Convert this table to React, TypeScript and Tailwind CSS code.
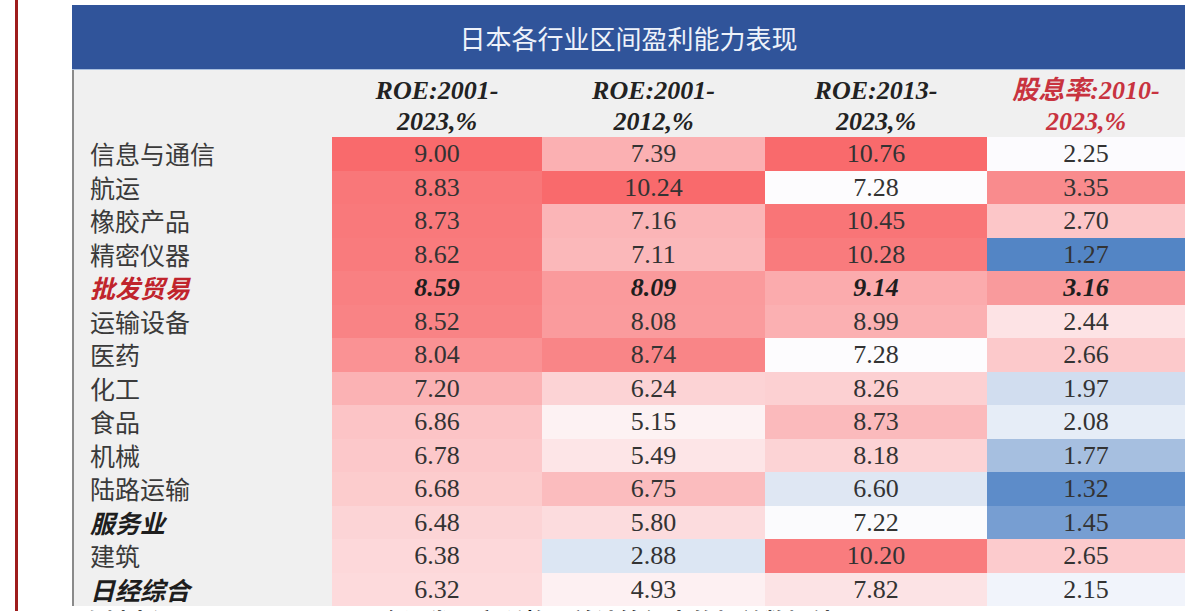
import React from "react";

type Cell = [string, string];
type Row = { label: string; style?: "red" | "bold"; cells: Cell[] };

const rows: Row[] = [
  { label: "信息与通信", cells: [["9.00", "bg-[#f96a6c]"], ["7.39", "bg-[#fbb0b2]"], ["10.76", "bg-[#f96a6c]"], ["2.25", "bg-[#fcfbfe]"]] },
  { label: "航运", cells: [["8.83", "bg-[#f97779]"], ["10.24", "bg-[#f96a6c]"], ["7.28", "bg-[#fdfcfe]"], ["3.35", "bg-[#f98b8d]"]] },
  { label: "橡胶产品", cells: [["8.73", "bg-[#f9797b]"], ["7.16", "bg-[#fbb5b7]"], ["10.45", "bg-[#f97577]"], ["2.70", "bg-[#fcc6c8]"]] },
  { label: "精密仪器", cells: [["8.62", "bg-[#f97b7d]"], ["7.11", "bg-[#fbb8ba]"], ["10.28", "bg-[#f97b7d]"], ["1.27", "bg-[#5385c5]"]] },
  { label: "批发贸易", style: "red", cells: [["8.59", "bg-[#f98082]"], ["8.09", "bg-[#fa9a9c]"], ["9.14", "bg-[#fbabad]"], ["3.16", "bg-[#f99a9c]"]] },
  { label: "运输设备", cells: [["8.52", "bg-[#f98385]"], ["8.08", "bg-[#fa9b9d]"], ["8.99", "bg-[#fbb0b2]"], ["2.44", "bg-[#fde3e5]"]] },
  { label: "医药", cells: [["8.04", "bg-[#fa9294]"], ["8.74", "bg-[#f98587]"], ["7.28", "bg-[#fdfcfe]"], ["2.66", "bg-[#fcc9cb]"]] },
  { label: "化工", cells: [["7.20", "bg-[#fbb2b4]"], ["6.24", "bg-[#fcd3d5]"], ["8.26", "bg-[#fcd0d2]"], ["1.97", "bg-[#d1ddef]"]] },
  { label: "食品", cells: [["6.86", "bg-[#fcc4c6]"], ["5.15", "bg-[#fdf2f3]"], ["8.73", "bg-[#fbbabc]"], ["2.08", "bg-[#e6edf7]"]] },
  { label: "机械", cells: [["6.78", "bg-[#fcc8ca]"], ["5.49", "bg-[#fde5e7]"], ["8.18", "bg-[#fcd3d5]"], ["1.77", "bg-[#a6bfe0]"]] },
  { label: "陆路运输", cells: [["6.68", "bg-[#fccccd]"], ["6.75", "bg-[#fbbcbe]"], ["6.60", "bg-[#dfe7f3]"], ["1.32", "bg-[#5d8cc9]"]] },
  { label: "服务业", style: "bold", cells: [["6.48", "bg-[#fcd4d6]"], ["5.80", "bg-[#fcdcde]"], ["7.22", "bg-[#fbfbfd]"], ["1.45", "bg-[#779ed2]"]] },
  { label: "建筑", cells: [["6.38", "bg-[#fdd8da]"], ["2.88", "bg-[#dce6f3]"], ["10.20", "bg-[#f97c7e]"], ["2.65", "bg-[#fccbcd]"]] },
  { label: "日经综合", style: "bold", cells: [["6.32", "bg-[#fddadc]"], ["4.93", "bg-[#fdf0f2]"], ["7.82", "bg-[#fce3e5]"], ["2.15", "bg-[#f1f4fb]"]] },
];

const colWidths = ["w-[210px]", "w-[223px]", "w-[222px]", "w-[198px]"];

const serif = "font-['Liberation_Serif','Noto_Serif','Noto_Sans_CJK_SC',serif]";
const cjk = "font-['Noto_Sans_CJK_SC','Liberation_Serif',sans-serif]";

export default function App() {
  const headers: { l1: string; l2: string; red?: boolean }[] = [
    { l1: "ROE:2001-", l2: "2023,%" },
    { l1: "ROE:2001-", l2: "2012,%" },
    { l1: "ROE:2013-", l2: "2023,%" },
    { l1: "股息率:2010-", l2: "2023,%", red: true },
  ];
  return (
    <div className="w-[1200px] h-[611px] bg-white overflow-hidden flex">
      <div className="w-[15px] shrink-0" />
      <div className="w-[3px] shrink-0 bg-[#9e1c1c]" />
      <div className="w-[54px] shrink-0" />
      <div className="flex flex-col pt-[5px]">
        <div className="w-[1113px] flex flex-col">
          <div className={`h-[64px] bg-[#30549a] flex items-center justify-center text-[26px] text-[#eef2fa] ${cjk}`}>
            日本各行业区间盈利能力表现
          </div>
          <div className="h-[1px] bg-[#a9bfdf]" />
          <div className="flex flex-col bg-[#f0f0f0] border-l-2 border-[#8a8a8a]">
            <div className="h-[67px] flex">
              <div className="w-[258px] shrink-0" />
              {headers.map((h, i) => (
                <div
                  key={i}
                  className={`${colWidths[i]} shrink-0 flex flex-col items-center pt-[5px] text-[26px] leading-[31px] font-bold italic ${serif} ${h.red ? "text-[#c8333f]" : "text-[#222]"}`}
                >
                  <span>{h.l1}</span>
                  <span>{h.l2}</span>
                </div>
              ))}
            </div>
            {rows.map((r, ri) => (
              <div key={ri} className="h-[33.5px] flex">
                <div
                  className={`w-[258px] shrink-0 pl-[16px] flex items-center text-[25px] ${cjk} ${
                    r.style === "red"
                      ? "text-[#c0242c] font-bold italic"
                      : r.style === "bold"
                      ? "text-[#1e1e1e] font-bold italic"
                      : "text-[#3a3a3a]"
                  }`}
                >
                  {r.label}
                </div>
                {r.cells.map((c, ci) => (
                  <div
                    key={ci}
                    className={`${colWidths[ci]} shrink-0 ${c[1]} flex items-center justify-center text-[26px] ${serif} ${
                      r.style === "red" ? "font-bold italic text-[#1e1e1e]" : "text-[#333]"
                    }`}
                  >
                    {c[0]}
                  </div>
                ))}
              </div>
            ))}
          </div>
        </div>
        <div className={`pl-[8px] pt-[3px] text-[24px] leading-none font-bold text-[#111] ${cjk}`}>
          资料来源：Bloomberg，国金证券研究所整理并计算得出的相关数据结果
        </div>
      </div>
    </div>
  );
}
